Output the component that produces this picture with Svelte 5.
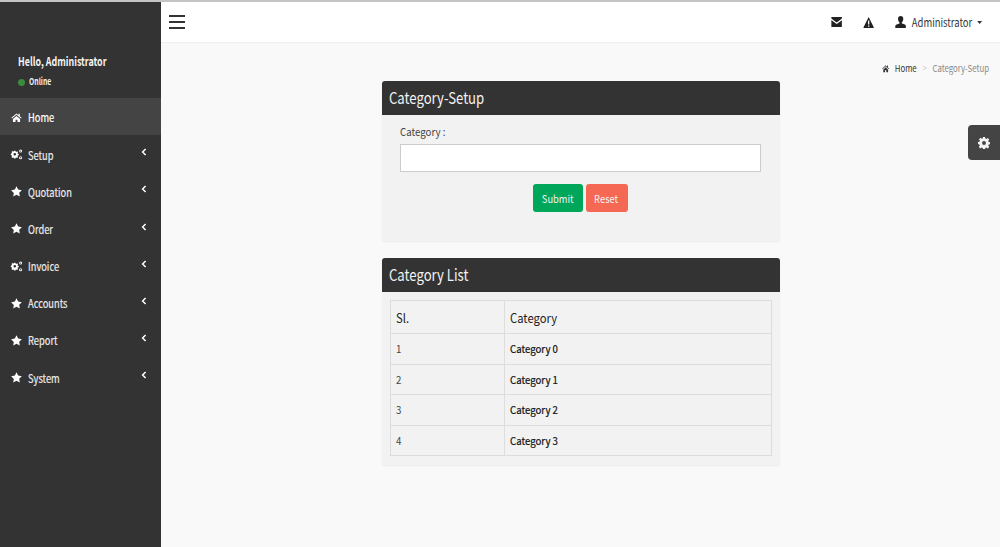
<script>
	const star = "M8 .3l2.4 4.9 5.4.8-3.900 3.800.9 5.400L8 12.900l-4.800 2.500.9-5.400L.2 6l5.400-.8z";
	const menu = [
		{ name: "Home", icon: "home", active: true },
		{ name: "Setup", icon: "cogs", sub: true },
		{ name: "Quotation", icon: "star", sub: true },
		{ name: "Order", icon: "star", sub: true },
		{ name: "Invoice", icon: "cogs", sub: true },
		{ name: "Accounts", icon: "star", sub: true },
		{ name: "Report", icon: "star", sub: true },
		{ name: "System", icon: "star", sub: true }
	];
	const categories = ["Category 0", "Category 1", "Category 2", "Category 3"];
</script>

<div class="page">
	<aside class="sidebar">
		<div class="user">
			<div class="hello"><span>Hello, Administrator</span></div>
			<div class="status"><i class="dot"></i><span>Online</span></div>
		</div>
		<ul class="menu">
			{#each menu as item}
				<li class:active={item.active}>
					<svg class="micon" viewBox="0 0 16 16" fill="#fff">
						{#if item.icon === "home"}
							<path d="M8 2L.5 8.4l.9 1L8 3.9l6.6 5.5.9-1-2.700-2.300V2.600h-2v2.100zM2.800 10.100V14.500h3.800v-3.400h2.800v3.400h3.800v-4.400L8 5.700z" />
						{:else if item.icon === "star"}
							<path d={star} />
						{:else}
							<g transform="translate(.6 .2) scale(.8)">
								<path fill-rule="evenodd" d="M4.800 2.800h2.600l.3 1.700 1.100.5 1.500-1 1.800 1.800-1 1.500.5 1.100 1.700.3v2.600l-1.700.3-.5 1.100 1 1.500-1.800 1.800-1.500-1-1.100.5-.3 1.700H4.800l-.3-1.700-1.100-.5-1.500 1-1.800-1.800 1-1.500-.5-1.100L-1 10.600V8l1.700-.3.5-1.100-1-1.500 1.800-1.800 1.500 1 1.100-.5zM6.100 6.900a2.400 2.400 0 1 0 0 4.800 2.400 2.400 0 0 0 0-4.800z" />
							</g>
							<path fill-rule="evenodd" d="M14 .8a2.200 2.200 0 1 1 0 4.400 2.200 2.200 0 0 1 0-4.400zm0 1.300a.9.9 0 1 0 0 1.800.9.9 0 0 0 0-1.800zM14 10.400a2.200 2.200 0 1 1 0 4.400 2.200 2.200 0 0 1 0-4.400zm0 1.300a.9.9 0 1 0 0 1.800.9.9 0 0 0 0-1.800z" />
						{/if}
					</svg>
					<span class="mname">{item.name}</span>
					{#if item.sub}
						<svg class="chev" viewBox="0 0 6 8"><path d="M4.600 1L1.600 4l3 3" fill="none" stroke="#fff" stroke-width="1.500" /></svg>
					{/if}
				</li>
			{/each}
		</ul>
	</aside>

	<div class="main">
		<header class="topbar">
			<div class="burger"><span></span><span></span><span></span></div>
			<div class="tools">
				<svg class="tool" viewBox="0 0 12 10" preserveAspectRatio="none">
					<path d="M0 0h12v1.400L6 5.400 0 1.400zM0 3l6 4 6-4v7H0z" fill="#222" />
				</svg>
				<svg class="tool warn" viewBox="0 0 12 11" preserveAspectRatio="none">
					<path fill-rule="evenodd" d="M6 0l6 11H0zM5.300 3.600v4h1.400v-4zm0 4.800v1.300h1.400V8.400z" fill="#222" />
				</svg>
				<svg class="person" viewBox="0 0 11 12" preserveAspectRatio="none">
					<path d="M5.500 0C7.300 0 8.300 1.300 8.100 3.200 8 4.600 7.400 5.800 6.700 6.300v1.200c1.500.6 4.300 1 4.300 2.700V12H0V10.200c0-1.700 2.800-2.100 4.300-2.700V6.300C3.600 5.800 3 4.600 2.900 3.200 2.700 1.300 3.700 0 5.500 0z" fill="#222" />
				</svg>
				<span class="account">Administrator</span>
				<i class="caret"></i>
			</div>
		</header>

		<main class="content">
			<nav class="crumbs">
				<svg class="chome" viewBox="0 0 16 16" fill="#333"><path d="M8 2L.5 8.400l.9 1L8 3.900l6.600 5.500.9-1-2.700-2.300V2.600h-2v2.100zM2.800 10.100V14.500h3.800v-3.400h2.800v3.400h3.800v-4.400L8 5.700z" /></svg>
				<span class="here">Home</span>
				<span class="sep">&gt;</span>
				<span class="muted">Category-Setup</span>
			</nav>

			<div class="column">
				<section class="panel setup">
					<h2><span>Category-Setup</span></h2>
					<form class="body" onsubmit={(e) => e.preventDefault()}>
						<label for="cat"><span>Category :</span></label>
						<input id="cat" type="text" />
						<div class="actions">
							<button class="submit" type="submit"><span>Submit</span></button>
							<button class="reset" type="reset"><span>Reset</span></button>
						</div>
					</form>
				</section>

				<section class="panel list">
					<h2><span>Category List</span></h2>
					<div class="tablewrap">
						<table>
							<thead>
								<tr><th class="sl"><span>Sl.</span></th><th><span>Category</span></th></tr>
							</thead>
							<tbody>
								{#each categories as cat, i}
									<tr><td><span>{i + 1}</span></td><td class="name"><span>{cat}</span></td></tr>
								{/each}
							</tbody>
						</table>
					</div>
				</section>
			</div>
		</main>
	</div>

	<div class="gear">
		<svg viewBox="0 0 16 16" width="12" height="12">
			<path fill-rule="evenodd" fill="#f2f2f2" d="M6.600 0h2.800l.4 2.100 1.300.5 1.800-1.200 2 2-1.200 1.800.5 1.300 2.100.4v2.800l-2.100.4-.5 1.300 1.200 1.800-2 2-1.800-1.200-1.300.5-.4 2.100H6.600l-.4-2.100-1.300-.5-1.800 1.200-2-2 1.200-1.800-.5-1.300L-.1 9.400V6.600l2.100-.4.5-1.300-1.200-1.800 2-2 1.800 1.200 1.300-.5zM8 5.400a2.600 2.600 0 1 0 0 5.200 2.600 2.600 0 0 0 0-5.200z" />
		</svg>
	</div>
</div>

<style>
	:global(body) {
		margin: 0;
		background: #f9f9f9;
		font-family: "Noto Sans CJK SC", "Liberation Sans", sans-serif;
		color: #333;
	}
	/* the reference text is horizontally squeezed, so spans get scaleX */
	.hello span,
	.status span,
	.mname,
	h2 span,
	label span,
	th span,
	td span {
		display: inline-block;
		transform-origin: left center;
		white-space: nowrap;
	}
	button span {
		display: inline-block;
		transform: scaleX(0.85);
	}
	.page {
		display: flex;
		height: 547px;
		overflow: hidden;
		border-top: 2px solid #c4c4c4;
		box-sizing: border-box;
		position: relative;
	}
	.sidebar {
		width: 161px;
		flex: none;
		background: #333;
		color: #fff;
	}
	.user {
		height: 96px;
		box-sizing: border-box;
		padding: 51px 0 0 18px;
	}
	.hello {
		font-size: 12px;
		font-weight: 700;
		line-height: 16px;
		color: #f4f4f4;
	}
	.hello span {
		transform: scaleX(0.74);
	}
	.status {
		display: flex;
		align-items: center;
		margin-top: 6px;
		font-size: 9px;
		font-weight: 700;
		line-height: 14px;
		color: #eee;
	}
	.status span {
		transform: scaleX(0.76);
	}
	.dot {
		width: 7px;
		height: 7px;
		border-radius: 50%;
		background: #3c8a3c;
		margin-right: 4px;
	}
	.menu {
		list-style: none;
		margin: 0;
		padding: 0;
	}
	.menu li {
		display: flex;
		align-items: center;
		height: 37.2px;
		box-sizing: border-box;
		padding: 1.500px 0 0 11px;
		font-size: 11.500px;
		color: #ececec;
		position: relative;
	}
	.menu li.active {
		background: #444;
		color: #fff;
	}
	.micon {
		width: 11px;
		height: 11px;
		margin-right: 6px;
		overflow: visible;
	}
	.mname {
		transform: scaleX(0.81);
		-webkit-text-stroke: 0.2px;
	}
	.chev {
		position: absolute;
		left: 141px;
		top: 13px;
		width: 6px;
		height: 8px;
	}
	.main {
		flex: 1;
		display: flex;
		flex-direction: column;
		min-width: 0;
	}
	.topbar {
		height: 41px;
		flex: none;
		background: #fff;
		border-bottom: 1px solid #eee;
		display: flex;
		align-items: center;
		justify-content: space-between;
		padding: 0 18px 0 8px;
		box-sizing: border-box;
	}
	.burger {
		display: flex;
		flex-direction: column;
		gap: 4px;
		width: 16px;
	}
	.burger span {
		height: 2px;
		background: #333;
	}
	.tools {
		display: flex;
		align-items: center;
		transform: scaleX(0.82);
		transform-origin: right center;
	}
	.tool {
		width: 13.400px;
		height: 10px;
		margin-right: 25.600px;
	}
	.tool.warn {
		height: 11px;
	}
	.person {
		width: 13.400px;
		height: 12px;
		margin-right: 7px;
	}
	.account {
		font-size: 11.500px;
		color: #333;
	}
	.caret {
		width: 0;
		height: 0;
		margin-left: 6.500px;
		border-top: 3px solid #333;
		border-left: 3.700px solid transparent;
		border-right: 3.700px solid transparent;
	}
	.content {
		flex: 1;
		display: flex;
		flex-direction: column;
	}
	.crumbs {
		display: flex;
		align-items: center;
		justify-content: flex-end;
		height: 14px;
		margin-top: 18px;
		padding-right: 11px;
		font-size: 9.500px;
		transform: scaleX(0.82);
		transform-origin: 828px center;
	}
	.chome {
		width: 12px;
		height: 9px;
		margin-right: 5.500px;
	}
	.sep {
		color: #ccc;
		margin: 0 7px;
	}
	.muted {
		color: #888;
	}
	.column {
		width: 398px;
		margin: 6px auto 0;
		display: flex;
		flex-direction: column;
		gap: 17px;
	}
	.panel {
		background: #f2f2f2;
		border-radius: 3px;
		box-shadow: 0 1px 2px rgba(0, 0, 0, 0.06);
	}
	.panel h2 {
		margin: 0;
		height: 34px;
		line-height: 32px;
		padding-left: 7px;
		background: #333;
		color: #f4f4f4;
		font-size: 16px;
		font-weight: 400;
		border-radius: 3px 3px 0 0;
	}
	h2 span {
		transform: scaleX(0.82);
	}
	.setup {
		height: 160px;
	}
	.body {
		padding: 9px 19px 0 18px;
		display: flex;
		flex-direction: column;
	}
	label {
		font-size: 11px;
		line-height: 14px;
		color: #444;
	}
	label span {
		transform: scaleX(0.88);
	}
	input {
		margin-top: 6px;
		height: 28px;
		box-sizing: border-box;
		border: 1px solid #ccc;
		background: #fff;
		padding: 0 8px;
	}
	.actions {
		display: flex;
		justify-content: center;
		gap: 3px;
		margin-top: 12px;
	}
	button {
		height: 28px;
		border: none;
		border-radius: 3px;
		color: #f2f2f2;
		font-family: inherit;
		font-size: 11px;
		padding: 0;
	}
	.submit {
		width: 50px;
		background: #00a65a;
	}
	.reset {
		width: 42px;
		background: #f56954;
	}
	.list {
		height: 207px;
	}
	.tablewrap {
		padding: 8px 8px 0;
	}
	table {
		width: 100%;
		border-collapse: collapse;
		border: 1px solid #ddd;
		table-layout: fixed;
	}
	th,
	td {
		border: 1px solid #ddd;
		text-align: left;
		padding: 0 5px;
	}
	th {
		height: 32px;
		font-size: 12.500px;
		font-weight: 400;
		color: #222;
	}
	th span {
		transform: scaleX(0.9);
	}
	th.sl {
		width: 103px;
	}
	td {
		height: 29.500px;
		font-size: 10.500px;
		color: #444;
	}
	td span {
		transform: scaleX(0.92);
	}
	td.name {
		color: #111;
		-webkit-text-stroke: 0.2px;
	}
	.gear {
		position: absolute;
		top: 123px;
		right: 0;
		width: 32px;
		height: 35px;
		background: #444;
		border-radius: 4px 0 0 4px;
		display: flex;
		align-items: center;
		justify-content: center;
	}
</style>
